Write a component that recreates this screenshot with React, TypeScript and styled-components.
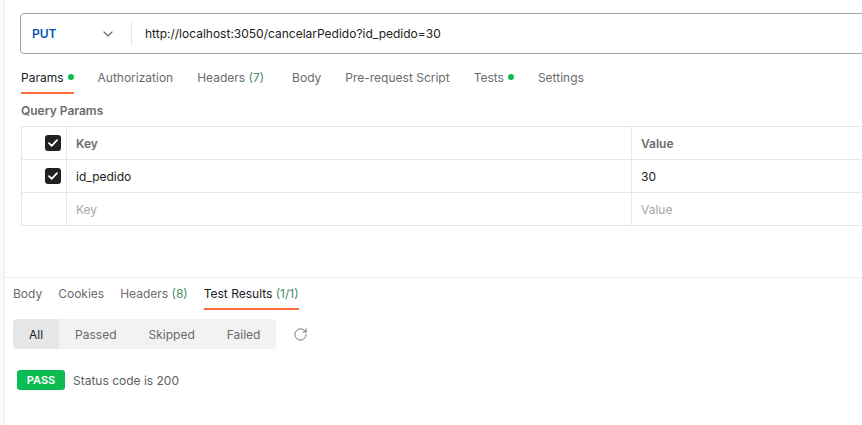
import styled, { createGlobalStyle } from 'styled-components';
import { RotateCw } from 'lucide-react';

const GlobalStyle = createGlobalStyle`
  html, body {
    margin: 0;
    padding: 0;
    background: #ffffff;
  }
  body {
    font-family: Inter, "Noto Sans", sans-serif;
    font-size: 12px;
    color: #212121;
  }
  * {
    box-sizing: border-box;
  }
`;

type Tab = { label: string; count?: string; dot?: boolean; active?: boolean; trail?: number };

const requestTabs: Tab[] = [
  { label: 'Params', dot: true, active: true },
  { label: 'Authorization' },
  { label: 'Headers', count: '(7)', trail: 4 },
  { label: 'Body' },
  { label: 'Pre-request Script' },
  { label: 'Tests', dot: true },
  { label: 'Settings' },
];

const responseTabs: Tab[] = [
  { label: 'Body' },
  { label: 'Cookies' },
  { label: 'Headers', count: '(8)' },
  { label: 'Test Results', count: '(1/1)', active: true },
];

const filters = ['All', 'Passed', 'Skipped', 'Failed'];

const Check = () => (
  <S.Checkbox>
    <svg width="10" height="8" viewBox="0 0 10 8" fill="none">
      <path
        d="M1 4.2 3.7 6.8 9 1.2"
        stroke="#ffffff"
        strokeWidth="1.8"
        strokeLinecap="round"
        strokeLinejoin="round"
      />
    </svg>
  </S.Checkbox>
);

const TabRow = ({ tabs, gap }: { tabs: Tab[]; gap: number }) => (
  <S.Tabs $gap={gap}>
    {tabs.map((t) => (
      <S.TabItem key={t.label} $active={t.active} $trail={t.trail ?? 0}>
        {t.label}
        {t.count && <S.Count>&nbsp;{t.count}</S.Count>}
        {t.dot && <S.Dot />}
      </S.TabItem>
    ))}
  </S.Tabs>
);

const App = () => {
  return (
    <>
      <GlobalStyle />
      <S.Shell>
        <S.SideStrip />
        <S.Main>
          <S.RequestPane>
            <S.UrlBar>
              <S.Method>
                <S.MethodName>PUT</S.MethodName>
                <svg width="10" height="6" viewBox="0 0 10 6" fill="none">
                  <path
                    d="M1 1 5 5 9 1"
                    stroke="#6b6b6b"
                    strokeWidth="1.2"
                    strokeLinecap="round"
                    strokeLinejoin="round"
                  />
                </svg>
              </S.Method>
              <S.Url>http://localhost:3050/cancelarPedido?id_pedido=30</S.Url>
            </S.UrlBar>

            <TabRow tabs={requestTabs} gap={24} />

            <S.SectionTitle>Query Params</S.SectionTitle>

            <S.Table>
              <S.Cell $first>
                <Check />
              </S.Cell>
              <S.Cell $head>Key</S.Cell>
              <S.Cell $head>Value</S.Cell>

              <S.Cell $first>
                <Check />
              </S.Cell>
              <S.Cell>id_pedido</S.Cell>
              <S.Cell>30</S.Cell>

              <S.Cell $first />
              <S.Cell $placeholder>Key</S.Cell>
              <S.Cell $placeholder>Value</S.Cell>
            </S.Table>
          </S.RequestPane>

          <S.ResponsePane>
            <TabRow tabs={responseTabs} gap={16} />

            <S.FilterRow>
              <S.Segmented>
                {filters.map((f, i) => (
                  <S.Segment key={f} $active={i === 0}>
                    {f}
                  </S.Segment>
                ))}
              </S.Segmented>
              <S.RefreshIcon size={15} strokeWidth={1.5} />
            </S.FilterRow>

            <S.Result>
              <S.PassBadge>PASS</S.PassBadge>
              <S.ResultText>Status code is 200</S.ResultText>
            </S.Result>
          </S.ResponsePane>
        </S.Main>
      </S.Shell>
    </>
  );
};

const S = {
  Shell: styled.div`
    display: flex;
    height: 100vh;
    overflow: hidden;
  `,
  SideStrip: styled.div`
    width: 5px;
    flex-shrink: 0;
    background: #f9f9f9;
    border-right: 1px solid #ededed;
  `,
  Main: styled.div`
    flex: 1;
    min-width: 0;
    display: flex;
    flex-direction: column;
    overflow: hidden;
  `,
  RequestPane: styled.div`
    height: 277px;
    flex-shrink: 0;
    padding: 13px 0 0 16px;
  `,
  UrlBar: styled.div`
    display: flex;
    align-items: center;
    height: 41px;
    margin-left: -1px;
    margin-right: -20px;
    border: 1px solid #a6a6a6;
    border-radius: 4px;
  `,
  Method: styled.div`
    display: flex;
    align-items: center;
    justify-content: space-between;
    width: 111px;
    height: 24px;
    padding: 0 18px 0 11px;
    border-right: 1px solid #e6e6e6;
  `,
  MethodName: styled.span`
    color: #0053b8;
    font-weight: 600;
    font-size: 12px;
  `,
  Url: styled.span`
    padding-left: 13px;
    font-size: 12px;
    color: #212121;
  `,
  Tabs: styled.div<{ $gap: number }>`
    display: flex;
    gap: ${(p) => p.$gap}px;
    margin-top: 8px;
  `,
  TabItem: styled.div<{ $active?: boolean; $trail: number }>`
    display: flex;
    align-items: center;
    height: 32px;
    padding-right: ${(p) => p.$trail}px;
    font-size: 12px;
    color: ${(p) => (p.$active ? '#212121' : '#6b6b6b')};
    border-bottom: 2px solid ${(p) => (p.$active ? '#ff6c37' : 'transparent')};
  `,
  Count: styled.span`
    color: #4a8c66;
  `,
  Dot: styled.span`
    width: 6px;
    height: 6px;
    margin-left: 4px;
    border-radius: 50%;
    background: #0cbb52;
  `,
  SectionTitle: styled.div`
    margin-top: 9px;
    height: 16px;
    line-height: 16px;
    font-size: 12px;
    font-weight: 600;
    color: #6b6b6b;
  `,
  Table: styled.div`
    display: grid;
    grid-template-columns: 44px 565px 1fr;
    margin-top: 7px;
    border-top: 1px solid #e6e6e6;
    border-left: 1px solid #e6e6e6;
  `,
  Cell: styled.div<{ $first?: boolean; $head?: boolean; $placeholder?: boolean }>`
    display: flex;
    align-items: center;
    justify-content: ${(p) => (p.$first ? 'flex-end' : 'flex-start')};
    height: 33px;
    padding: ${(p) => (p.$first ? '0 5px 0 0' : '0 0 0 9px')};
    border-bottom: 1px solid #e6e6e6;
    border-left: ${(p) => (p.$first ? 'none' : '1px solid #e6e6e6')};
    font-size: 12px;
    font-weight: ${(p) => (p.$head ? 600 : 400)};
    color: ${(p) => (p.$head ? '#6b6b6b' : p.$placeholder ? '#a6a6a6' : '#212121')};
  `,
  Checkbox: styled.span`
    display: flex;
    align-items: center;
    justify-content: center;
    width: 16px;
    height: 16px;
    border-radius: 3px;
    background: #212121;
  `,
  ResponsePane: styled.div`
    flex: 1;
    border-top: 1px solid #ededed;
    padding-left: 8px;

    & > div:first-child {
      margin-top: 0;
    }
  `,
  FilterRow: styled.div`
    display: flex;
    align-items: center;
    gap: 17px;
    margin-top: 9px;
  `,
  Segmented: styled.div`
    display: flex;
    height: 30px;
    border-radius: 4px;
    background: #f2f2f2;
    overflow: hidden;
  `,
  Segment: styled.div<{ $active?: boolean }>`
    display: flex;
    align-items: center;
    padding: 0 16px;
    font-size: 12px;
    color: ${(p) => (p.$active ? '#212121' : '#6b6b6b')};
    background: ${(p) => (p.$active ? '#e6e6e6' : 'transparent')};
  `,
  RefreshIcon: styled(RotateCw)`
    color: #6b6b6b;
  `,
  Result: styled.div`
    display: flex;
    align-items: center;
    gap: 8px;
    margin: 21px 0 0 4px;
  `,
  PassBadge: styled.span`
    display: flex;
    align-items: center;
    justify-content: center;
    width: 48px;
    height: 20px;
    border-radius: 3px;
    background: #0cbb52;
    color: #ffffff;
    font-size: 11px;
    font-weight: 600;
  `,
  ResultText: styled.span`
    font-size: 12px;
    color: #616161;
  `,
};

export default App;
